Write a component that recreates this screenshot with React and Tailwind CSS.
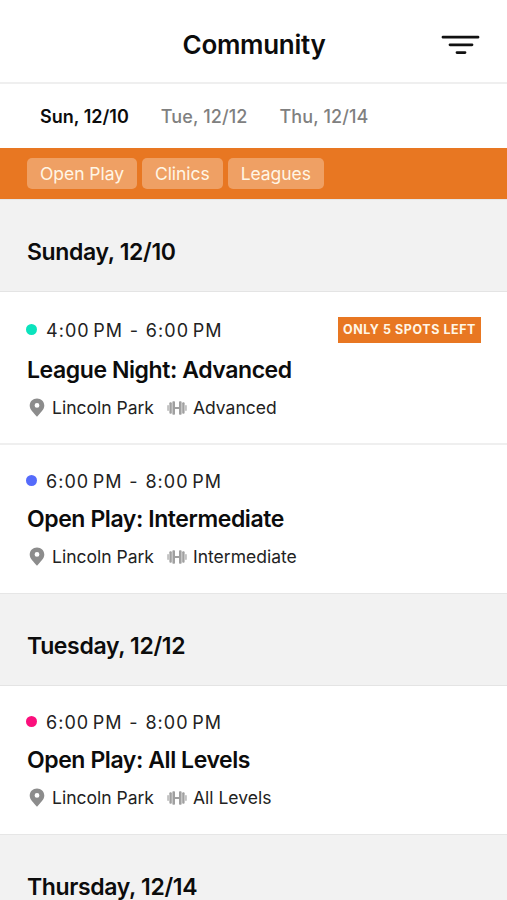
import React from 'react';

const days = ['Sun, 12/10', 'Tue, 12/12', 'Thu, 12/14'];
const filters = ['Open Play', 'Clinics', 'Leagues'];

const PinIcon = () => (
  <svg className="w-4 h-[19px] mb-px shrink-0" viewBox="0 0 16 19" fill="#8c8c8c">
    <path
      fillRule="evenodd"
      d="M8 0.4C3.9 0.4 0.7 3.5 0.7 7.5C0.7 11.9 4.3 14.2 8 18.8C11.7 14.2 15.3 11.9 15.3 7.5C15.3 3.5 12.1 0.4 8 0.4ZM8 5A2.4 2.4 0 1 1 8 9.8A2.4 2.4 0 1 1 8 5Z"
    />
  </svg>
);

const DumbbellIcon = () => (
  <svg className="w-5 h-[14px] shrink-0" viewBox="0 0 20 14" fill="#a0a0a0">
    <rect x="0.3" y="4" width="1.5" height="6" rx="0.75" fill="#b4b4b4" />
    <rect x="2.4" y="1.3" width="2.4" height="11.4" rx="0.9" />
    <rect x="5.4" y="0.3" width="2.6" height="13.4" rx="0.8" />
    <rect x="8" y="6" width="4" height="2" />
    <rect x="12" y="0.3" width="2.6" height="13.4" rx="0.8" />
    <rect x="15.2" y="1.3" width="2.4" height="11.4" rx="0.9" />
    <rect x="18.2" y="4" width="1.5" height="6" rx="0.75" fill="#b4b4b4" />
  </svg>
);

const DayHeader = ({ children }) => (
  <div className="h-[93px] pt-[36px] px-[27px] bg-[#f2f2f2] border-y border-t-[#e6e6e6] border-b-[#e4e4e4]">
    <h2 className="text-[23px] leading-8 font-semibold tracking-[-0.35px]">{children}</h2>
  </div>
);

const Session = ({ dot, start, end, title, level, badge }) => (
  <div className={badge ? 'pt-[25px] pb-[22px] px-[26px]' : 'pt-[23px] pb-[23px] px-[26px]'}>
    <div className={`flex items-center justify-between h-[26px] ${badge ? 'mb-[11px]' : 'mb-[9px]'}`}>
      <div className="flex items-center gap-[9px]">
        <span className={`w-[11px] h-[11px] mb-px rounded-full ${dot}`}></span>
        <span className="text-[18px] tracking-[1.05px] [word-spacing:-2.6px] text-[#222]">
          {start}
          <span className="[word-spacing:0.6px]"> - </span>
          {end}
        </span>
      </div>
      {badge && (
        <span className="h-[26px] w-[143px] pt-px flex items-center justify-center bg-[#e87722] text-[#fff6e6] text-[12.5px] font-bold tracking-[0.55px] whitespace-nowrap">
          {badge}
        </span>
      )}
    </div>
    <h3 className="pl-px text-[23px] leading-8 font-semibold tracking-[-0.42px]">{title}</h3>
    <div className="mt-[9px] pl-[3px] h-[26px] flex items-center text-[17.5px] text-[#222]">
      <PinIcon />
      <span className="ml-[7px] w-[102px] whitespace-nowrap">Lincoln Park</span>
      <span className="ml-[13px] flex">
        <DumbbellIcon />
      </span>
      <span className="ml-[6px]">{level}</span>
    </div>
  </div>
);

const App = () => {
  return (
    <div className="w-full h-[900px] overflow-hidden bg-white text-[#0c0c0c] font-['Inter','Liberation_Sans',sans-serif]">
      <header className="relative h-[84px] pt-[7px] pl-px flex items-center justify-center border-b-2 border-[#efefef]">
        <h1 className="text-[26px] font-semibold tracking-[-0.3px]">Community</h1>
        <button className="absolute right-[27px] top-[34px]">
          <svg
            className="w-[39px] h-[22px]"
            viewBox="0 0 39 22"
            stroke="#111"
            strokeWidth="2.8"
            strokeLinecap="round"
          >
            <path d="M2 3.2H37M9 10.8H31M16 18.6H24" />
          </svg>
        </button>
      </header>

      {/* Day tabs */}
      <nav className="h-16 flex items-center gap-8 pl-10 text-[18px] font-semibold text-[#808080]">
        {days.map((day, i) => (
          <button key={day} className={i === 0 ? 'text-[#0c0c0c]' : 'font-medium tracking-[0.1px]'}>
            {day}
          </button>
        ))}
      </nav>

      {/* Filter chips */}
      <div className="h-[51px] flex items-center gap-[5px] pl-[27px] bg-[#e87722] text-[17.5px] tracking-[-0.05px] text-white">
        {filters.map((name) => (
          <button key={name} className="h-[31px] px-[13px] pt-px rounded-[5px] bg-white/30 text-[#fff6e6]">
            {name}
          </button>
        ))}
      </div>

      <DayHeader>Sunday, 12/10</DayHeader>
      <Session
        dot="bg-[#0be3bd]"
        start="4:00 PM"
        end="6:00 PM"
        title="League Night: Advanced"
        level="Advanced"
        badge="ONLY 5 SPOTS LEFT"
      />
      <div className="border-t-2 border-[#efefef]"></div>
      <Session
        dot="bg-[#556bfb]"
        start="6:00 PM"
        end="8:00 PM"
        title="Open Play: Intermediate"
        level="Intermediate"
      />

      <DayHeader>Tuesday, 12/12</DayHeader>
      <Session
        dot="bg-[#fb0f7c]"
        start="6:00 PM"
        end="8:00 PM"
        title="Open Play: All Levels"
        level="All Levels"
      />

      <DayHeader>Thursday, 12/14</DayHeader>
    </div>
  );
};

export default App;
